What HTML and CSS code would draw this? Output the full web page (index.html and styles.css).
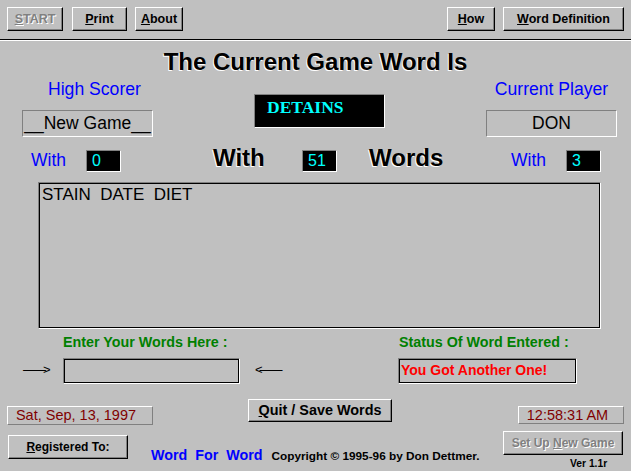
FILE: index.html
```html
<!DOCTYPE html>
<html>
<head>
<meta charset="utf-8">
<link rel="stylesheet" href="styles.css">
</head>
<body>
<div class="form">
  <div class="toolbar">
    <div class="btn disabled tb-start"><u>S</u>TART</div>
    <div class="btn tb-print"><u>P</u>rint</div>
    <div class="btn tb-about"><u>A</u>bout</div>
    <div class="spacer"></div>
    <div class="btn tb-how"><u>H</u>ow</div>
    <div class="btn tb-def"><u>W</u>ord Definition</div>
  </div>

  <div class="title emboss">The Current Game Word Is</div>

  <div class="row2">
    <div class="col col-left">
      <div class="label blue hs">High Scorer</div>
      <div class="sunken name">__New Game__</div>
    </div>
    <div class="word-box">DETAINS</div>
    <div class="col col-right">
      <div class="label blue cp">Current Player</div>
      <div class="sunken name">DON</div>
    </div>
  </div>

  <div class="row3">
    <span class="with-small blue w-a">With</span>
    <span class="num">0</span>
    <span class="big emboss big-with">With</span>
    <span class="num">51</span>
    <span class="big emboss big-words">Words</span>
    <span class="with-small blue w-b">With</span>
    <span class="num">3</span>
  </div>

  <div class="words-list">STAIN  DATE  DIET</div>

  <div class="labels">
    <span class="green lbl-enter">Enter Your Words Here :</span>
    <span class="green lbl-status">Status Of Word Entered :</span>
  </div>

  <div class="inputs">
    <span class="arrow arrow-l">——&gt;</span>
    <div class="field entry"></div>
    <span class="arrow arrow-r">&lt;——</span>
    <div class="field status">You Got Another One!</div>
  </div>

  <div class="bottom-a">
    <div class="raised-box date">Sat, Sep, 13, 1997</div>
    <div class="btn quit"><u>Q</u>uit / Save Words</div>
    <div class="raised-box time">12:58:31 AM</div>
  </div>

  <div class="bottom-b">
    <div class="btn reg"><u>R</u>egistered To:</div>
    <div class="credits">
      <span class="blue brand">Word  For  Word</span>
      <span class="copy">Copyright © 1995-96 by Don Dettmer.</span>
    </div>
    <div class="right-group">
      <div class="btn disabled setup">Set Up <u>N</u>ew Game</div>
      <div class="ver">Ver 1.1r</div>
    </div>
  </div>
</div>
</body>
</html>
```
FILE: styles.css
```css
html, body {
  margin: 0;
  padding: 0;
}
body {
  background: #c0c0c0;
  font-family: "Liberation Sans", Arial, sans-serif;
  color: #000;
}
.form {
  width: 631px;
  height: 471px;
  overflow: hidden;
  background: #c0c0c0;
}

/* buttons */
.btn {
  box-sizing: border-box;
  border: 1px solid;
  border-color: #fff #000 #000 #fff;
  box-shadow: inset -1px -1px 0 #808080;
  background: #c0c0c0;
  font-weight: bold;
  text-align: center;
  white-space: nowrap;
}
.btn u { text-decoration: underline; }
.disabled {
  color: #808080;
  text-shadow: 1px 1px 0 #fff;
}

.toolbar {
  display: flex;
  box-sizing: border-box;
  height: 40px;
  padding: 7px 7px 0 7px;
  border-bottom: 1px solid #000;
  box-shadow: 0 1px 0 #fff;
}
.toolbar .btn {
  height: 24px;
  line-height: 22px;
  font-size: 12.5px;
}
.tb-start { width: 56px; }
.tb-print { width: 55px; margin-left: 9px; }
.tb-about { width: 48px; margin-left: 8px; }
.spacer { flex: 1; }
.tb-how { width: 48px; }
.tb-def { width: 121px; margin-left: 8px; }

.emboss {
  text-shadow: -1px 1px 0 #fff;
}

.title {
  margin-top: 1px;
  padding-top: 6px;
  height: 29px;
  line-height: 30px;
  text-align: center;
  font-size: 24px;
  font-weight: bold;
}

.blue { color: #0000ff; }
.green { color: #008000; }

.row2 {
  display: flex;
  height: 68px;
}
.col { width: 131px; }
.col-left { margin-left: 22px; }
.col-right { margin-left: 101px; }
.label {
  margin-top: 3px;
  height: 20px;
  line-height: 20px;
  font-size: 17.6px;
  white-space: nowrap;
}
.hs { padding-left: 26px; }
.cp { text-align: center; }
.sunken {
  box-sizing: border-box;
  border: 1px solid;
  border-color: #808080 #fff #fff #808080;
}
.name {
  margin-top: 11px;
  height: 27px;
  line-height: 25px;
  font-size: 17.5px;
  text-align: center;
  white-space: nowrap;
}
.word-box {
  box-sizing: border-box;
  margin-left: 101px;
  margin-top: 18px;
  width: 131px;
  height: 34px;
  background: #000;
  border: 1px solid;
  border-color: #808080 #fff #fff #808080;
  color: #00ffff;
  font-family: "Liberation Serif", "Times New Roman", serif;
  font-weight: bold;
  font-size: 17.5px;
  line-height: 20px;
  padding: 2px 0 0 12px;
}

.row3 {
  display: flex;
  align-items: baseline;
  height: 38px;
}
.with-small {
  width: 55px;
  font-size: 17.5px;
  line-height: 20px;
}
.w-a { margin-left: 31px; }
.num {
  box-sizing: border-box;
  width: 35px;
  height: 22px;
  background: #000;
  color: #00ffff;
  border: 1px solid;
  border-color: #808080 #fff #fff #808080;
  font-size: 16px;
  line-height: 20px;
  padding-left: 5px;
}
.big {
  font-size: 24px;
  font-weight: bold;
  line-height: 28px;
}
.big-with { margin-left: 92px; width: 89px; }
.big-words { margin-left: 32px; width: 142px; }

.words-list {
  box-sizing: border-box;
  margin-left: 38px;
  width: 563px;
  height: 147px;
  border: 1px solid;
  border-color: #808080 #fff #fff #808080;
  box-shadow: inset 0 0 0 1px #000;
  padding: 2px 0 0 3px;
  font-size: 17px;
  line-height: 20px;
  white-space: pre;
}

.labels {
  display: flex;
  box-sizing: border-box;
  height: 29px;
  padding-top: 5px;
  font-size: 14.3px;
  font-weight: bold;
  line-height: 17px;
  white-space: nowrap;
}
.lbl-enter { margin-left: 63px; width: 336px; }

.inputs {
  display: flex;
  align-items: center;
  height: 26px;
}
.arrow {
  font-size: 13px;
  line-height: 14px;
  white-space: nowrap;
  letter-spacing: -3px;
  margin-top: -3px;
}
.arrow-l { margin-left: 23px; width: 40px; }
.arrow-r { margin-left: 15px; width: 143px; }
.field {
  box-sizing: border-box;
  height: 26px;
  border: 1px solid;
  border-color: #808080 #fff #fff #808080;
  box-shadow: inset 0 0 0 1px #000;
}
.entry { width: 177px; }
.status {
  width: 179px;
  color: #ff0000;
  font-weight: bold;
  font-size: 14px;
  line-height: 20px;
  padding: 1px 0 0 2px;
  white-space: nowrap;
}

.bottom-a {
  display: flex;
  align-items: flex-start;
  height: 45px;
}
.raised-box {
  box-sizing: border-box;
  border: 1px solid;
  border-color: #fff #808080 #808080 #fff;
  color: #800000;
  font-size: 14.5px;
  text-align: center;
  white-space: nowrap;
}
.date {
  margin-left: 7px;
  margin-top: 22px;
  width: 146px;
  height: 19px;
  line-height: 17px;
  padding-right: 8px;
}
.quit {
  margin-left: 95px;
  margin-top: 15px;
  width: 144px;
  height: 23px;
  line-height: 21px;
  font-size: 14.4px;
}
.time {
  margin-left: 126px;
  margin-top: 22px;
  width: 106px;
  height: 18px;
  line-height: 16px;
  padding-right: 7px;
}

.bottom-b {
  display: flex;
  align-items: flex-start;
  height: 42px;
}
.reg {
  margin-left: 8px;
  margin-top: 6px;
  width: 120px;
  height: 24px;
  line-height: 22px;
  font-size: 12px;
}
.credits {
  display: flex;
  align-items: baseline;
  margin-left: 23px;
  margin-top: 17px;
  line-height: 18px;
  white-space: pre;
}
.brand {
  font-size: 14.3px;
  font-weight: bold;
  margin-right: 9px;
}
.copy {
  font-size: 11.8px;
  font-weight: bold;
}
.right-group {
  margin-left: auto;
  margin-right: 8px;
  width: 120px;
}
.setup {
  margin-top: 2px;
  height: 24px;
  line-height: 22px;
  font-size: 12px;
}
.ver {
  margin-top: 3px;
  margin-left: 67px;
  font-size: 10.3px;
  font-weight: bold;
  line-height: 12px;
  white-space: nowrap;
}
```
